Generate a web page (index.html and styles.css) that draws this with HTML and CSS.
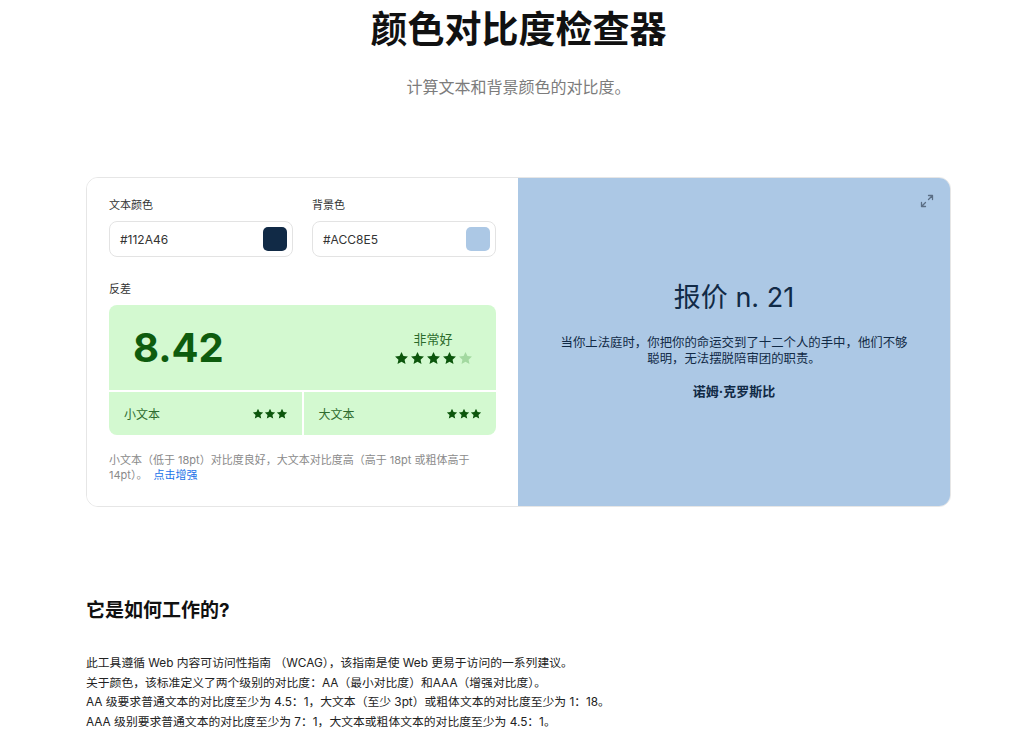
FILE: index.html
```html
<!DOCTYPE html>
<html lang="zh">
<head>
<meta charset="utf-8">
<title>颜色对比度检查器</title>
<link rel="stylesheet" href="styles.css">
</head>
<body>
<div class="page">
  <h1 class="title">颜色对比度检查器</h1>
  <p class="subtitle">计算文本和背景颜色的对比度。</p>

  <div class="card">
    <div class="controls">
      <div class="inputs">
        <div class="field">
          <div class="label">文本颜色</div>
          <div class="input">
            <span class="hex">#112A46</span>
            <span class="swatch swatch-text"></span>
          </div>
        </div>
        <div class="field">
          <div class="label">背景色</div>
          <div class="input">
            <span class="hex">#ACC8E5</span>
            <span class="swatch swatch-bg"></span>
          </div>
        </div>
      </div>
      <div class="label label-contrast">反差</div>
      <div class="result">
        <div class="result-top">
          <div class="ratio">8.42</div>
          <div class="rating">
            <div class="rating-text">非常好</div>
            <div class="stars big">
              <svg viewBox="0 0 24 24"><path d="M12 1.5l3.1 6.6 7.2.8-5.4 4.9 1.5 7.1L12 17.3l-6.4 3.6 1.5-7.1L1.7 8.9l7.2-.8z"/></svg>
              <svg viewBox="0 0 24 24"><path d="M12 1.5l3.1 6.6 7.2.8-5.4 4.9 1.5 7.1L12 17.3l-6.4 3.6 1.5-7.1L1.7 8.9l7.2-.8z"/></svg>
              <svg viewBox="0 0 24 24"><path d="M12 1.5l3.1 6.6 7.2.8-5.4 4.9 1.5 7.1L12 17.3l-6.4 3.6 1.5-7.1L1.7 8.9l7.2-.8z"/></svg>
              <svg viewBox="0 0 24 24"><path d="M12 1.5l3.1 6.6 7.2.8-5.4 4.9 1.5 7.1L12 17.3l-6.4 3.6 1.5-7.1L1.7 8.9l7.2-.8z"/></svg>
              <svg class="off" viewBox="0 0 24 24"><path d="M12 1.5l3.1 6.6 7.2.8-5.4 4.9 1.5 7.1L12 17.3l-6.4 3.6 1.5-7.1L1.7 8.9l7.2-.8z"/></svg>
            </div>
          </div>
        </div>
        <div class="result-bottom">
          <div class="cell">
            <span class="cell-label">小文本</span>
            <span class="stars small">
              <svg viewBox="0 0 24 24"><path d="M12 1.5l3.1 6.6 7.2.8-5.4 4.9 1.5 7.1L12 17.3l-6.4 3.6 1.5-7.1L1.7 8.9l7.2-.8z"/></svg>
              <svg viewBox="0 0 24 24"><path d="M12 1.5l3.1 6.6 7.2.8-5.4 4.9 1.5 7.1L12 17.3l-6.4 3.6 1.5-7.1L1.7 8.9l7.2-.8z"/></svg>
              <svg viewBox="0 0 24 24"><path d="M12 1.5l3.1 6.6 7.2.8-5.4 4.9 1.5 7.1L12 17.3l-6.4 3.6 1.5-7.1L1.7 8.9l7.2-.8z"/></svg>
            </span>
          </div>
          <div class="cell">
            <span class="cell-label">大文本</span>
            <span class="stars small">
              <svg viewBox="0 0 24 24"><path d="M12 1.5l3.1 6.6 7.2.8-5.4 4.9 1.5 7.1L12 17.3l-6.4 3.6 1.5-7.1L1.7 8.9l7.2-.8z"/></svg>
              <svg viewBox="0 0 24 24"><path d="M12 1.5l3.1 6.6 7.2.8-5.4 4.9 1.5 7.1L12 17.3l-6.4 3.6 1.5-7.1L1.7 8.9l7.2-.8z"/></svg>
              <svg viewBox="0 0 24 24"><path d="M12 1.5l3.1 6.6 7.2.8-5.4 4.9 1.5 7.1L12 17.3l-6.4 3.6 1.5-7.1L1.7 8.9l7.2-.8z"/></svg>
            </span>
          </div>
        </div>
      </div>
      <p class="note">小文本（低于 18pt）对比度良好，大文本对比度高（高于 18pt 或粗体高于<br>14pt）。 <a class="link" href="#">点击增强</a></p>
    </div>

    <div class="preview">
      <svg class="expand" viewBox="0 0 14 14" fill="none" stroke="currentColor" stroke-width="1.3" stroke-linecap="round" stroke-linejoin="round">
        <path d="M8.5 1.5h4v4M12.5 1.5L8.5 5.5M5.5 12.5h-4v-4M1.5 12.5l4-4"/>
      </svg>
      <div class="quote-title">报价 n. 21</div>
      <p class="quote">当你上法庭时，你把你的命运交到了十二个人的手中，他们不够聪明，无法摆脱陪审团的职责。</p>
      <div class="author">诺姆·克罗斯比</div>
    </div>
  </div>

  <h2 class="how">它是如何工作的?</h2>
  <div class="explain">
    <p>此工具遵循 Web 内容可访问性指南 （WCAG），该指南是使 Web 更易于访问的一系列建议。</p>
    <p>关于颜色，该标准定义了两个级别的对比度：AA（最小对比度）和AAA（增强对比度）。</p>
    <p>AA 级要求普通文本的对比度至少为 4.5：1，大文本（至少 3pt）或粗体文本的对比度至少为 1：18。</p>
    <p>AAA 级别要求普通文本的对比度至少为 7：1，大文本或粗体文本的对比度至少为 4.5：1。</p>
  </div>
</div>
</body>
</html>
```

FILE: styles.css
```css
* { box-sizing: border-box; }

body {
  margin: 0;
  background: #ffffff;
  font-family: "Inter", "Noto Sans CJK SC", sans-serif;
  color: #222;
}

.page {
  width: 865px;
  margin-left: 86px;
}

.title {
  margin: 0;
  font-size: 37px;
  line-height: 60px;
  font-weight: 700;
  text-align: center;
  color: #111;
}

.subtitle {
  margin: 15px 0 0;
  font-size: 16px;
  line-height: 24px;
  text-align: center;
  color: #7c7c7c;
}

.card {
  margin-top: 78px;
  display: flex;
  height: 330px;
  border: 1px solid #e6e6e6;
  border-radius: 12px;
  overflow: hidden;
}

.controls {
  width: 431px;
  padding: 19px 22px 0 22px;
  background: #fff;
}

.inputs {
  display: flex;
  gap: 19px;
}

.field { width: 184px; }

.label {
  font-size: 11px;
  line-height: 16px;
  color: #333;
}

.input {
  margin-top: 8px;
  height: 36px;
  border: 1px solid #e3e3e3;
  border-radius: 8px;
  display: flex;
  align-items: center;
  justify-content: space-between;
  padding: 0 5px 0 10px;
}

.hex {
  font-size: 12px;
  color: #333;
}

.swatch {
  width: 24px;
  height: 24px;
  border-radius: 5px;
}
.swatch-text { background: #112A46; }
.swatch-bg { background: #ACC8E5; }

.label-contrast { margin-top: 24px; }

.result {
  margin-top: 8px;
  width: 387px;
  border-radius: 8px;
  overflow: hidden;
  display: flex;
  flex-direction: column;
  gap: 2px;
  background: #fff;
}

.result-top {
  height: 85px;
  background: #d3f9d0;
  display: flex;
  align-items: center;
  justify-content: space-between;
  padding: 0 23px 0 24px;
}

.ratio {
  font-size: 40px;
  font-weight: 700;
  color: #0e5c0e;
}

.rating {
  display: flex;
  flex-direction: column;
  align-items: center;
  gap: 4px;
  padding-top: 2px;
}

.rating-text {
  font-size: 13px;
  line-height: 16px;
  color: #2b6b2b;
}

.stars {
  display: flex;
  fill: #0c560c;
}
.stars.big svg { width: 15px; height: 15px; margin: 0 0.5px; }
.stars.big .off { fill: #a3d9a0; }
.stars.small svg { width: 12px; height: 12px; margin-left: 0; }

.result-bottom {
  display: flex;
  gap: 2px;
  height: 43px;
}

.cell {
  flex: 1;
  background: #d3f9d0;
  display: flex;
  align-items: center;
  justify-content: space-between;
  padding: 0 14px 0 15px;
}

.cell-label {
  font-size: 12px;
  color: #2e6b2e;
  margin-top: -1px;
}

.note {
  margin: 18px 0 0;
  font-size: 11px;
  line-height: 15px;
  color: #8a8a8a;
}

.link {
  color: #1a73e8;
  text-decoration: none;
  margin-left: 3px;
}

.preview {
  position: relative;
  flex: 1;
  background: #ACC8E5;
  color: #112A46;
  display: flex;
  flex-direction: column;
  align-items: center;
  justify-content: center;
  padding-bottom: 3px;
}

.expand {
  position: absolute;
  top: 16px;
  right: 16px;
  width: 14px;
  height: 14px;
  color: #5b6e85;
}

.quote-title {
  font-size: 27px;
  line-height: 32px;
}

.quote {
  margin: 21px 0 0;
  width: 356px;
  font-size: 12.4px;
  line-height: 16px;
  text-align: center;
}

.author {
  margin-top: 16px;
  font-size: 13px;
  line-height: 16px;
  font-weight: 700;
}

.how {
  margin: 90px 0 0;
  font-size: 19px;
  line-height: 28px;
  font-weight: 700;
  color: #111;
}

.explain {
  margin-top: 29px;
}

.explain p {
  margin: 0;
  font-size: 11.8px;
  line-height: 19.5px;
  color: #222;
}
```
